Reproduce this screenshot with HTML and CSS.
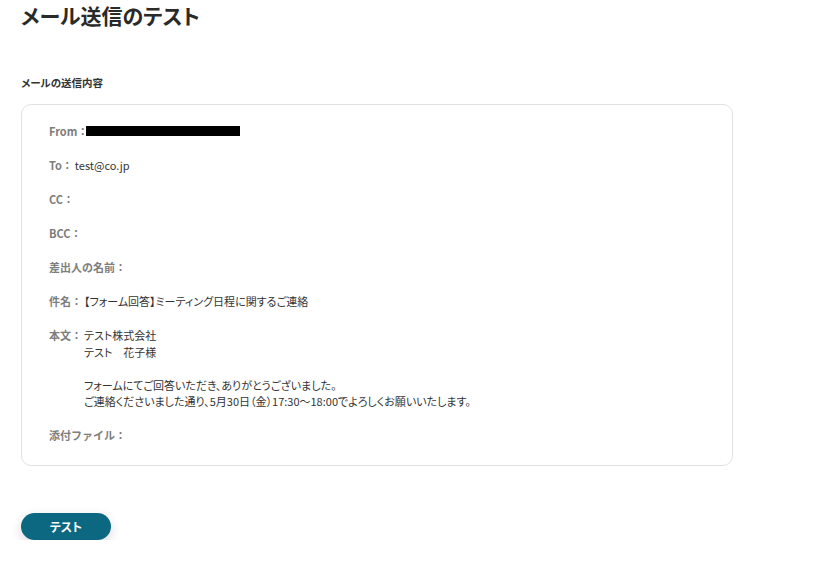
FILE: index.html
```html
<!DOCTYPE html>
<html lang="ja">
<head>
    <meta charset="UTF-8">
    <meta name="viewport" content="width=device-width, initial-scale=1.0">
    <title>メール送信のテスト</title>
    <link rel="stylesheet" href="styles.css">
</head>
<body>
    <div class="page">
        <h1 class="page-title">メール送信のテスト</h1>

        <h2 class="section-label">メールの送信内容</h2>

        <div class="mail-card">
            <div class="mail-row">
                <span class="mail-label">From：</span>
                <span class="redacted"></span>
            </div>
            <div class="mail-row">
                <span class="mail-label">To：</span>
                <span class="mail-value">test@co.jp</span>
            </div>
            <div class="mail-row">
                <span class="mail-label">CC：</span>
            </div>
            <div class="mail-row">
                <span class="mail-label">BCC：</span>
            </div>
            <div class="mail-row">
                <span class="mail-label">差出人の名前：</span>
            </div>
            <div class="mail-row">
                <span class="mail-label">件名：</span>
                <span class="mail-value">【フォーム回答】ミーティング日程に関するご連絡</span>
            </div>
            <div class="mail-row">
                <span class="mail-label">本文：</span>
                <div class="mail-body">
                    <p>テスト株式会社<br>テスト　花子様</p>
                    <p>フォームにてご回答いただき、ありがとうございました。<br>ご連絡くださいました通り、5月30日（金）17:30〜18:00でよろしくお願いいたします。</p>
                </div>
            </div>
            <div class="mail-row">
                <span class="mail-label">添付ファイル：</span>
            </div>
        </div>

        <button class="button">テスト</button>
    </div>
</body>
</html>
```

FILE: styles.css
```css
body {
    font-family: "Noto Sans CJK JP", "Noto Sans", sans-serif;
    margin: 0;
    padding: 0;
    background-color: #fff;
    color: #333;
}

.page {
    padding: 0 21px;
}

.page-title {
    margin: 0;
    font-size: 21px;
    line-height: 30px;
    font-weight: 700;
    color: #2a2a2a;
    font-feature-settings: "palt";
}

.section-label {
    margin: 45px 0 0;
    font-size: 10.5px;
    line-height: 16px;
    font-weight: 700;
    color: #333;
    font-feature-settings: "palt";
}

.mail-card {
    width: 712px;
    box-sizing: border-box;
    margin-top: 13px;
    padding: 18px 27px 21px;
    border: 1px solid #e2e2e2;
    border-radius: 10px;
    display: flex;
    flex-direction: column;
    gap: 17px;
}

.mail-row {
    display: flex;
    align-items: flex-start;
    font-size: 11px;
    line-height: 17px;
    min-height: 17px;
}

.mail-label {
    color: #7d7d7d;
    font-weight: 600;
    white-space: nowrap;
    margin-right: 2px;
}

.mail-value {
    color: #333;
    font-feature-settings: "palt";
}

.redacted {
    display: inline-block;
    width: 154px;
    height: 10px;
    margin-top: 3px;
    margin-left: -4px;
    background-color: #000;
}

.mail-body {
    color: #333;
    line-height: 16.5px;
    font-feature-settings: "palt";
}

.mail-body p {
    margin: 0 0 16.5px;
}

.mail-body p:last-child {
    margin-bottom: 0;
}

.button {
    display: block;
    margin-top: 47px;
    width: 90px;
    height: 27px;
    border: none;
    border-radius: 14px;
    background-color: #0c6880;
    color: #fff;
    font-family: inherit;
    font-size: 12px;
    font-weight: 700;
    cursor: pointer;
    font-feature-settings: "palt";
    box-shadow: 0 4px 12px rgba(0, 0, 0, 0.15);
}
```
